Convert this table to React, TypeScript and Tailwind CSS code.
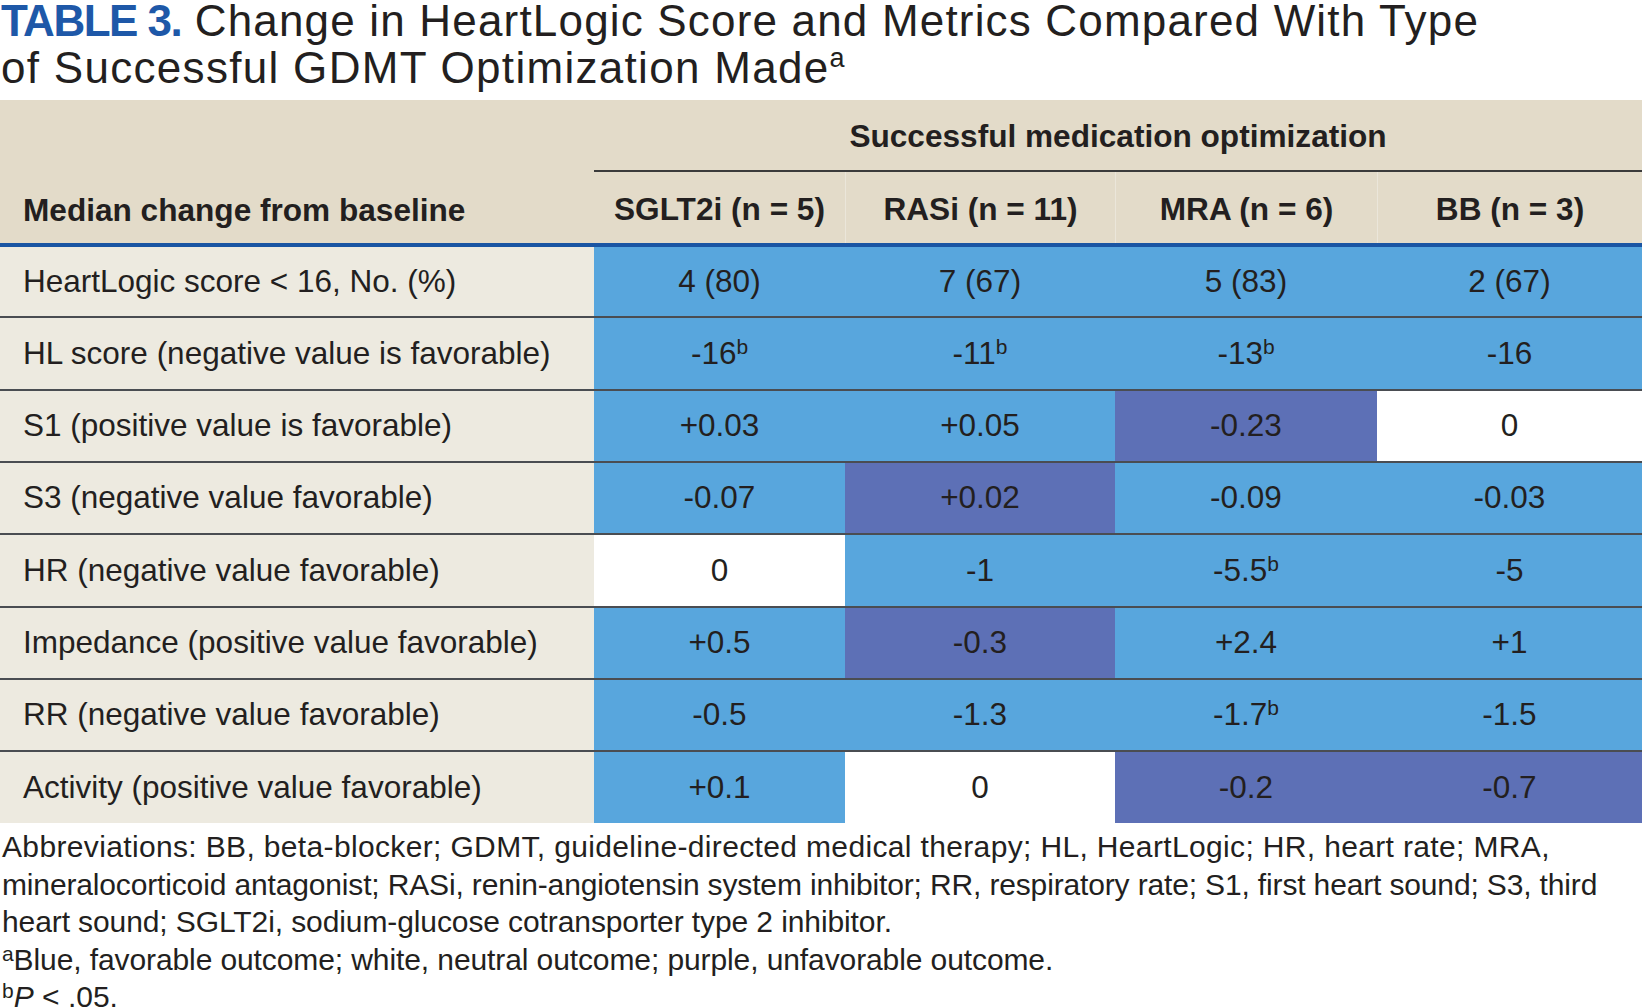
type Tone = "b" | "p" | "w";

interface Cell {
  v: string;
  sup?: boolean;
  tone: Tone;
}

interface Row {
  label: string;
  cells: Cell[];
  h: string;
}

const toneClass: Record<Tone, string> = {
  b: "bg-[#58a6dd]",
  p: "bg-[#5d70b6]",
  w: "bg-white",
};

// row heights alternate 72/73 so the rules land where the printed table has them
const rows: Row[] = [
  {
    label: "HeartLogic score < 16, No. (%)",
    h: "h-[69px]",
    cells: [
      { v: "4 (80)", tone: "b" },
      { v: "7 (67)", tone: "b" },
      { v: "5 (83)", tone: "b" },
      { v: "2 (67)", tone: "b" },
    ],
  },
  {
    label: "HL score (negative value is favorable)",
    h: "h-[73px]",
    cells: [
      { v: "-16", sup: true, tone: "b" },
      { v: "-11", sup: true, tone: "b" },
      { v: "-13", sup: true, tone: "b" },
      { v: "-16", tone: "b" },
    ],
  },
  {
    label: "S1 (positive value is favorable)",
    h: "h-[72px]",
    cells: [
      { v: "+0.03", tone: "b" },
      { v: "+0.05", tone: "b" },
      { v: "-0.23", tone: "p" },
      { v: "0", tone: "w" },
    ],
  },
  {
    label: "S3 (negative value favorable)",
    h: "h-[72px]",
    cells: [
      { v: "-0.07", tone: "b" },
      { v: "+0.02", tone: "p" },
      { v: "-0.09", tone: "b" },
      { v: "-0.03", tone: "b" },
    ],
  },
  {
    label: "HR (negative value favorable)",
    h: "h-[73px]",
    cells: [
      { v: "0", tone: "w" },
      { v: "-1", tone: "b" },
      { v: "-5.5", sup: true, tone: "b" },
      { v: "-5", tone: "b" },
    ],
  },
  {
    label: "Impedance (positive value favorable)",
    h: "h-[72px]",
    cells: [
      { v: "+0.5", tone: "b" },
      { v: "-0.3", tone: "p" },
      { v: "+2.4", tone: "b" },
      { v: "+1", tone: "b" },
    ],
  },
  {
    label: "RR (negative value favorable)",
    h: "h-[72px]",
    cells: [
      { v: "-0.5", tone: "b" },
      { v: "-1.3", tone: "b" },
      { v: "-1.7", sup: true, tone: "b" },
      { v: "-1.5", tone: "b" },
    ],
  },
  {
    label: "Activity (positive value favorable)",
    h: "h-[73px]",
    cells: [
      { v: "+0.1", tone: "b" },
      { v: "0", tone: "w" },
      { v: "-0.2", tone: "p" },
      { v: "-0.7", tone: "p" },
    ],
  },
];

const groups = ["SGLT2i (n = 5)", "RASi (n = 11)", "MRA (n = 6)", "BB (n = 3)"];

const cols = "grid grid-cols-[594px_251px_270px_262px_265px] text-[31.5px]";

export default function App() {
  return (
    <div className="w-[1642px] h-[1007px] overflow-hidden bg-white text-[#231f20] font-['Liberation_Sans',Arial,sans-serif]">
      {/* title */}
      <div className="mb-[6px] pl-[1px] text-[44px] whitespace-nowrap">
        <div className="leading-[42px] tracking-[1.18px]">
          <span className="font-bold text-[#1e58a8] tracking-[-1.5px]">TABLE 3.</span> Change in HeartLogic Score and
          Metrics Compared With Type
        </div>
        <div className="leading-[52px] tracking-[1.3px]">
          of Successful GDMT Optimization Made
          <sup className="text-[27px] tracking-normal relative -top-[16px]">a</sup>
        </div>
      </div>

      {/* table header */}
      <div className="grid grid-cols-[594px_1fr] bg-[#e3dbc9] text-[31.6px] font-bold">
        <div className="flex items-end pl-[23px] pb-[9px]">Median change from baseline</div>
        <div>
          <div className="h-[72px] pt-[4px] flex items-center justify-center border-b-2 border-[#3b3b3b]">
            Successful medication optimization
          </div>
          <div className="grid grid-cols-[251px_270px_262px_265px] h-[71px]">
            {groups.map((g, i) => (
              <div
                key={g}
                className={
                  i === 0
                    ? "flex items-center justify-center pt-[5px]"
                    : "flex items-center justify-center pt-[5px] border-l border-[#ebe6da]"
                }
              >
                {g}
              </div>
            ))}
          </div>
        </div>
      </div>
      <div className="h-[4px] bg-[#1a55a3]" />

      {/* body */}
      {rows.map((row, r) => (
        <div
          key={row.label}
          className={r === 0 ? `${cols} ${row.h}` : `${cols} ${row.h} border-t-2 border-[#4a4d52]`}
        >
          <div className="bg-[#edeae0] flex items-center pl-[23px] whitespace-nowrap">{row.label}</div>
          {row.cells.map((c, i) => (
            <div key={i} className={`${toneClass[c.tone]} flex items-center justify-center`}>
              <span>
                {c.v}
                {c.sup && <sup className="text-[21px] relative -top-[10px]">b</sup>}
              </span>
            </div>
          ))}
        </div>
      ))}

      {/* footnotes */}
      <div className="pt-[5px] pl-[2px] text-[30px] leading-[37.5px] whitespace-nowrap">
        <div className="tracking-[0.35px]">
          Abbreviations: BB, beta-blocker; GDMT, guideline-directed medical therapy; HL, HeartLogic; HR, heart rate; MRA,
        </div>
        <div className="tracking-[-0.15px]">
          mineralocorticoid antagonist; RASi, renin-angiotensin system inhibitor; RR, respiratory rate; S1, first heart
          sound; S3, third
        </div>
        <div className="tracking-[-0.1px]">heart sound; SGLT2i, sodium-glucose cotransporter type 2 inhibitor.</div>
        <div className="tracking-[-0.1px]">
          <sup className="text-[21px] relative -top-[9px]">a</sup>Blue, favorable outcome; white, neutral outcome;
          purple, unfavorable outcome.
        </div>
        <div>
          <sup className="text-[21px] relative -top-[9px]">b</sup>
          <i>P</i> &lt; .05.
        </div>
      </div>
    </div>
  );
}
